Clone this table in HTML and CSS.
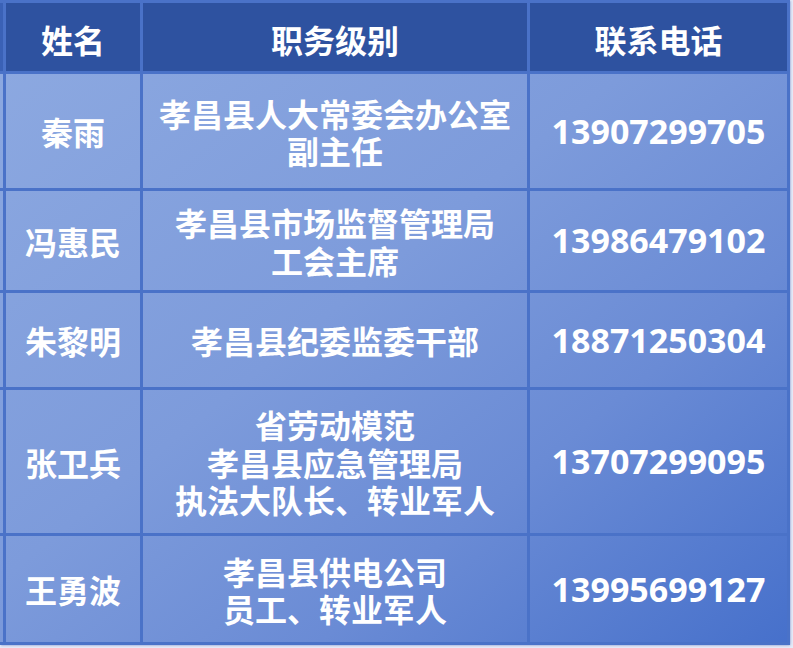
FILE: index.html
```html
<!DOCTYPE html>
<html lang="zh-CN">
<head>
<meta charset="utf-8">
<title>联系表</title>
<link rel="stylesheet" href="styles.css">
</head>
<body>
<div class="table">
  <div class="cell head edge"></div>
  <div class="cell head">姓名</div>
  <div class="cell head">职务级别</div>
  <div class="cell head">联系电话</div>

  <div class="cell edge"></div>
  <div class="cell name">秦雨</div>
  <div class="cell post">孝昌县人大常委会办公室<br>副主任</div>
  <div class="cell phone">13907299705</div>

  <div class="cell edge"></div>
  <div class="cell name">冯惠民</div>
  <div class="cell post">孝昌县市场监督管理局<br>工会主席</div>
  <div class="cell phone">13986479102</div>

  <div class="cell edge"></div>
  <div class="cell name">朱黎明</div>
  <div class="cell post">孝昌县纪委监委干部</div>
  <div class="cell phone">18871250304</div>

  <div class="cell edge"></div>
  <div class="cell name">张卫兵</div>
  <div class="cell post">省劳动模范<br>孝昌县应急管理局<br>执法大队长、转业军人</div>
  <div class="cell phone">13707299095</div>

  <div class="cell edge"></div>
  <div class="cell name">王勇波</div>
  <div class="cell post">孝昌县供电公司<br>员工、转业军人</div>
  <div class="cell phone">13995699127</div>
</div>
</body>
</html>
```
FILE: styles.css
```css
html, body {
  margin: 0;
  padding: 0;
}
body {
  background: #e6eaf7;
  width: 793px;
  height: 648px;
  overflow: hidden;
}
.table {
  display: grid;
  grid-template-columns: 6px 137px 387px 260px;
  grid-template-rows: 71px 117px 102px 97px 146px 109px;
  width: 790px;
  border-top: 3px solid #4a72c8;
  background: linear-gradient(to bottom right, #8eaae1 0%, #7d9bdb 45%, #6a8bd5 70%, #4670cb 100%);
  font-family: "Noto Sans CJK SC", "Noto Sans", sans-serif;
  font-weight: 700;
  color: #ffffff;
  font-size: 32px;
  border-bottom-right-radius: 3px;
  box-shadow: 1px 1px 2px rgba(70, 100, 180, 0.35);
}
.cell {
  box-sizing: border-box;
  border-right: 3px solid #4a72c8;
  border-bottom: 3px solid #4a72c8;
  display: flex;
  align-items: center;
  justify-content: center;
  text-align: center;
  line-height: 37.5px;
}
.head {
  background: #2e52a0;
  padding-top: 6px;
}
.head.edge {
  background: #3a61b6;
}
.name, .post {
  padding-top: 2px;
}
.phone {
  font-family: "Open Sans", "Noto Sans", sans-serif;
  font-size: 34px;
  padding-top: 1px;
}
```
